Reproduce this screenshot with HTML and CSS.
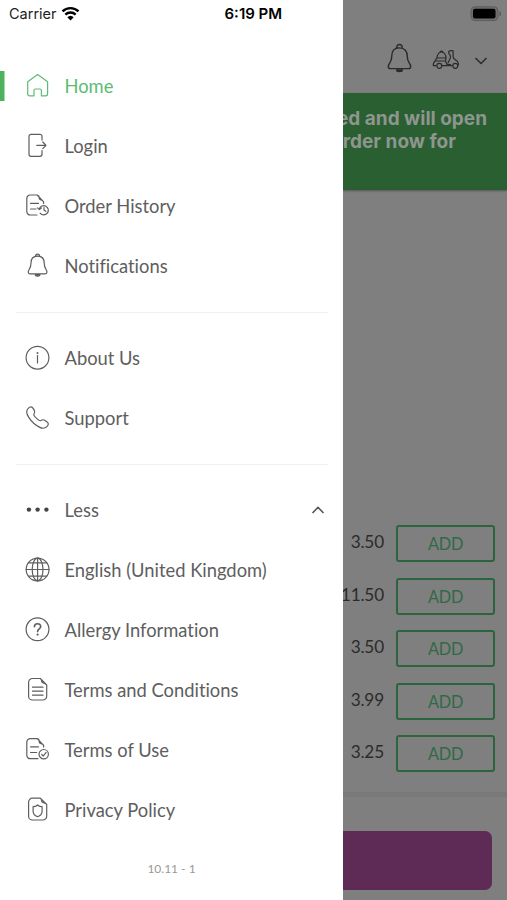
FILE: index.html
```html
<!DOCTYPE html>
<html lang="en">
<head>
<meta charset="utf-8">
<title>Menu</title>
<link rel="stylesheet" href="styles.css">
</head>
<body>
<div class="screen">
  <aside class="drawer">
    <div class="status">
      <span class="carrier">Carrier</span>
      <svg class="wifi" viewBox="0 0 20 16"><path d="M1.500 5.800a12 12 0 0 1 17 0M4.500 9.300a7.800 7.800 0 0 1 11 0" fill="none" stroke="#000" stroke-width="2.600"/><path d="M10 15.500 6.600 12a4.900 4.900 0 0 1 6.800 0z"/></svg>
      <span class="time">6:19 PM</span>
    </div>
    <nav>
      <ul class="group">
        <li class="item active"><svg class="icon" viewBox="0 0 28 28"><path d="M3.700 9.800 13.600 2.500l10 7.300v12a2 2 0 0 1-2 2h-4.200v-5.300a1.500 1.500 0 0 0-1.500-1.500h-4.400a1.500 1.500 0 0 0-1.500 1.500v5.300H5.700a2 2 0 0 1-2-2z"/></svg><span>Home</span></li>
        <li class="item"><svg class="icon" viewBox="0 0 28 28"><path d="M18 8V4.300a2 2 0 0 0-2-2H7a2 2 0 0 0-2 2v18a2 2 0 0 0 2 2h9a2 2 0 0 0 2-2v-3.800M12.800 13.300h9M18.800 10l3.200 3.300-3.200 3.300"/></svg><span>Login</span></li>
        <li class="item"><svg class="icon" viewBox="0 0 28 28"><path d="M19.600 11.500V9.800L13.300 3H6.200a3.400 3.400 0 0 0-3.400 3.400v13.200A3.400 3.400 0 0 0 6.200 23H13M13.300 3c2 .4 2 1.500 2 3.500 0 1.800 3.500 1.200 4.300 3.300M6.500 11.300h8M6.500 17h5.500M15.300 17a4.600 4.600 0 1 1 .8 4.100M13.500 15.800l1.800 1.800 2-1.600M20 15.500V18l1.800 1.300"/></svg><span>Order History</span></li>
        <li class="item"><svg class="icon" viewBox="0 0 28 28"><path d="M11.500 4.200a2.100 2.100 0 1 1 4.200 0M13.600 4.200c-4.500 0-6.600 3-6.600 6.800 0 6-2.800 6.500-2.800 9 0 1.300.6 1.800 1.800 1.800h15.200c1.200 0 1.800-.5 1.800-1.800 0-2.500-2.800-3-2.800-9 0-3.800-2.100-6.800-6.600-6.800z"/><path class="solid" d="M11.300 22.500h4.600a2.300 1.600 0 0 1-4.600 0z"/></svg><span>Notifications</span></li>
      </ul>
      <ul class="group">
        <li class="item"><svg class="icon" viewBox="0 0 28 28"><circle cx="13.500" cy="13.700" r="11.400"/><path d="M13.500 11.500V19"/><circle class="solid" cx="13.500" cy="8.900" r=".4"/></svg><span>About Us</span></li>
        <li class="item"><svg class="icon" viewBox="0 0 28 28"><path d="M4.200 4.300C6.200 2.300 8 2.500 9.300 4.600l1.100 2c.8 1.500.3 2.400-.5 3.500-.5.800 1.300 3 3 4.500 1.600 1.500 3 2.600 4 2 1-.7 2.300-1.300 3.700-.4l2.200 1.500c1.900 1.300 2 3 .3 4.700-2 2-4.300 2.500-7.300 1-4-2.100-8.800-6.500-11.200-10.300C2.400 9.600 2.200 6.300 4.200 4.300z"/></svg><span>Support</span></li>
      </ul>
      <ul class="group">
        <li class="item"><svg class="icon" viewBox="0 0 28 28"><g class="dots"><circle cx="4.900" cy="13.600" r="2.200"/><circle cx="13.600" cy="13.600" r="2.200"/><circle cx="22.400" cy="13.600" r="2.200"/></g></svg><span>Less</span><svg class="chevron" viewBox="0 0 14 10"><path d="M1.500 8 7 2.300 12.500 8"/></svg></li>
        <li class="item"><svg class="icon" viewBox="0 0 28 28"><circle cx="13.600" cy="13.500" r="11.400"/><ellipse cx="13.600" cy="13.500" rx="5.400" ry="11.400"/><path d="M13.600 2.100v22.800M2.200 13.500H25M4.600 6.800h18M4.600 20.200h18"/></svg><span>English (United Kingdom)</span></li>
        <li class="item"><svg class="icon" viewBox="0 0 28 28"><circle cx="13.500" cy="13.300" r="11.400"/><path class="bold" d="M10.400 10.800c0-4 6.300-4 6.300-.2 0 2.400-3.100 2.200-3.100 5"/><circle class="solid" cx="13.600" cy="18.600" r=".5"/></svg><span>Allergy Information</span></li>
        <li class="item"><svg class="icon" viewBox="0 0 28 28"><path d="M22.700 9v11.200a3.800 3.800 0 0 1-3.800 3.800H8.400a3.800 3.800 0 0 1-3.800-3.800V6.300a3.800 3.800 0 0 1 3.800-3.800h7.900zM16.300 2.500c1.500.5 1.200 1.500 1.300 3 .2 2.200 4.300 1 5.100 3.500M8.500 11.200H19M8.500 15.200H19M8.500 19.200H19"/></svg><span>Terms and Conditions</span></li>
        <li class="item"><svg class="icon" viewBox="0 0 28 28"><path d="M19.600 11V9.300L13.300 2.700H6.200a3.400 3.400 0 0 0-3.400 3.400v13.200a3.400 3.400 0 0 0 3.400 3.400H14M13.300 2.700c2 .4 2 1.500 2 3.500 0 1.800 3.500 1 4.300 3.100M6.500 10.800h8M6.500 16.500h6.200M17.700 18.500l1.600 1.500 2.800-3.600"/><circle cx="19.700" cy="18.200" r="4.700"/></svg><span>Terms of Use</span></li>
        <li class="item"><svg class="icon" viewBox="0 0 28 28"><path d="M22.700 8.500v11.700a3.800 3.800 0 0 1-3.800 3.800H8.400a3.800 3.800 0 0 1-3.800-3.800V6a3.800 3.800 0 0 1 3.800-3.800h7.900zM16.300 2.200c1.500.5 1.200 1.500 1.300 3 .2 2.200 4.300 1 5.100 3.300M13.600 9c1.300 1.200 2.700 1.700 4.500 1.700v4.200c0 3-1.700 4.800-4.500 5.800-2.800-1-4.500-2.800-4.500-5.800v-4.200c1.800 0 3.200-.5 4.500-1.700z"/></svg><span>Privacy Policy</span></li>
      </ul>
    </nav>
    <p class="version">10.11 - 1</p>
  </aside>
  <main class="page">
    <div class="page-status"><svg class="battery" viewBox="0 0 32 16"><rect x="1" y=".8" width="27" height="13.800" rx="4" fill="#6e6e6e" stroke="#5d5d5d"/><rect x="3" y="2.800" width="22.500" height="9.800" rx="2"/><path d="M29.500 5c2 1 2 4.500 0 5.500z" fill="#555"/></svg></div>
    <header class="toolbar">
      <svg class="bell" viewBox="0 0 28 32"><path d="M11.300 5a2.800 2.800 0 1 1 5.400 0M14 5C8.500 5 6 8.500 6 13.500c0 7-3.600 7.500-3.600 10.700 0 1.500.8 2.300 2.300 2.300h18.600c1.500 0 2.300-.8 2.300-2.300 0-3.200-3.600-3.700-3.600-10.700C22 8.500 19.500 5 14 5z"/><path class="dark" d="M11 28h6a3 1.600 0 0 1-6 0z"/></svg>
      <svg class="scooter" viewBox="0 0 28 22"><path d="M5 10a4.500 6 0 0 1 9 0zM8 4.500a1.500 1.500 0 0 1 3 0M4.800 10 3 13h10.500l.5-3M3 13c-1.500 1.500-2 2.800-1.700 4.700h3.400M13.500 13l1.500 3.500h4M10 17.700h10.500M16 15.500c.3-2.500 3-4.500 2.500-7.500L16.800 5.500V3.200c1.500-.8 3-.8 4.300-.4v6c0 2.700 3.400 3.200 4.700 5.200.8 1.200.8 2.300.7 3.300"/><circle cx="7.300" cy="17.800" r="2.500"/><circle cx="23.300" cy="17.800" r="2.500"/></svg>
      <svg class="down" viewBox="0 0 14 10"><path d="M1.500 2 7 7.500 12.500 2"/></svg>
    </header>
    <div class="banner"><div>closed and will open</div><div class="line-two">order now for</div></div>
    <section class="products">
      <div class="product"><span>3.50</span><button>ADD</button></div>
      <div class="product"><span>11.50</span><button>ADD</button></div>
      <div class="product"><span>3.50</span><button>ADD</button></div>
      <div class="product"><span>3.99</span><button>ADD</button></div>
      <div class="product"><span>3.25</span><button>ADD</button></div>
    </section>
    <footer class="basket"><div class="basket-button"></div></footer>
  </main>
</div>
</body>
</html>
```
FILE: styles.css
```css
* { box-sizing: border-box; }
body { margin: 0; font-family: Lato, sans-serif; font-variant-ligatures: none; }
.screen { display: grid; grid-template-columns: 343px 164px; width: 507px; height: 900px; overflow: hidden; }
.drawer { background: #fff; color: #5e5e5e; }
.status { display: flex; align-items: center; height: 56px; padding: 0 0 28px 9px; color: #000; font: 15px/28px Inter, sans-serif; }
.carrier { width: 48px; color: #222; font-size: 14.500px; }
.wifi { width: 19px; height: 15px; margin: -2px 0 0 4px; }
.time { margin-left: 144.500px; font-size: 15px; font-weight: 600; white-space: nowrap; }
.group { list-style: none; margin: 0; padding: 0; }
.group + .group { margin-top: 16px; padding-top: 16.500px; position: relative; }
.group + .group::before { content: ""; position: absolute; top: 0; left: 16px; right: 15px; height: 1.500px; background: #f0f0f0; }
.item { display: flex; align-items: center; height: 59.900px; padding-left: 24px; font-size: 18.350px; }
.item span { margin-left: 12.500px; white-space: nowrap; }
.active { color: #5bbd72; background: linear-gradient(#4eb15d, #4eb15d) 0 15px / 4.500px 30px no-repeat; }
.icon { width: 28px; height: 28px; fill: none; stroke: currentColor; stroke-width: 1.200; stroke-linecap: round; stroke-linejoin: round; }
.solid { fill: currentColor; }
.dots { fill: #444; stroke: none; }
.bold { stroke-width: 1.600; }
.chevron { width: 14px; height: 10px; margin: 0 18px 0 auto; fill: none; stroke: #555; stroke-width: 1.600; }
.version { margin: 20px 0 0; text-align: center; font-size: 12px; line-height: 18px; color: #999; }
.page { display: flex; flex-direction: column; background: #7f7f7f; overflow: hidden; }
.page-status { display: flex; justify-content: flex-end; height: 28px; padding: 6px 5px 0 0; }
.battery { width: 32px; height: 16px; }
.toolbar { display: flex; align-items: center; height: 65px; padding: 0 19px 4px 43px; fill: none; stroke: #2b2b2b; stroke-width: 1.500; stroke-linejoin: round; }
.bell { width: 27px; height: 31px; }
.scooter { width: 28px; height: 22px; margin-left: 19px; stroke-width: 1.200; }
.down { width: 14px; height: 10px; margin: 4px 0 0 auto; }
.dark { fill: #2b2b2b; }
.banner { display: flex; flex-direction: column; align-items: flex-end; height: 97px; padding: 14px 20px 0 0; background: #295f31; color: #8f958f; font: 700 19px/23px Inter, sans-serif; white-space: nowrap; box-shadow: 0 1px 2px #555; }
.line-two { margin-right: 31px; }
.products { display: flex; flex-direction: column; gap: 15.500px; margin-top: 335px; }
.product { display: flex; align-items: center; justify-content: flex-end; height: 37px; padding-right: 12px; color: #2b2b2b; font-size: 17.200px; }
.product span { line-height: 22px; padding-bottom: 3px; letter-spacing: -.15px; }
.product button { width: 99px; height: 37px; margin-left: 12px; padding: 0; flex: none; border: 2px solid #2d6440; border-radius: 3px; background: none; color: #2f6a46; font: 16.300px Lato, sans-serif; letter-spacing: -.2px; }
.basket { flex: 1; margin-top: 20px; padding-top: 34px; border-top: 5px solid #797979; }
.basket-button { width: 149px; height: 59px; background: #5e2b57; border-radius: 0 7px 7px 0; }
```
